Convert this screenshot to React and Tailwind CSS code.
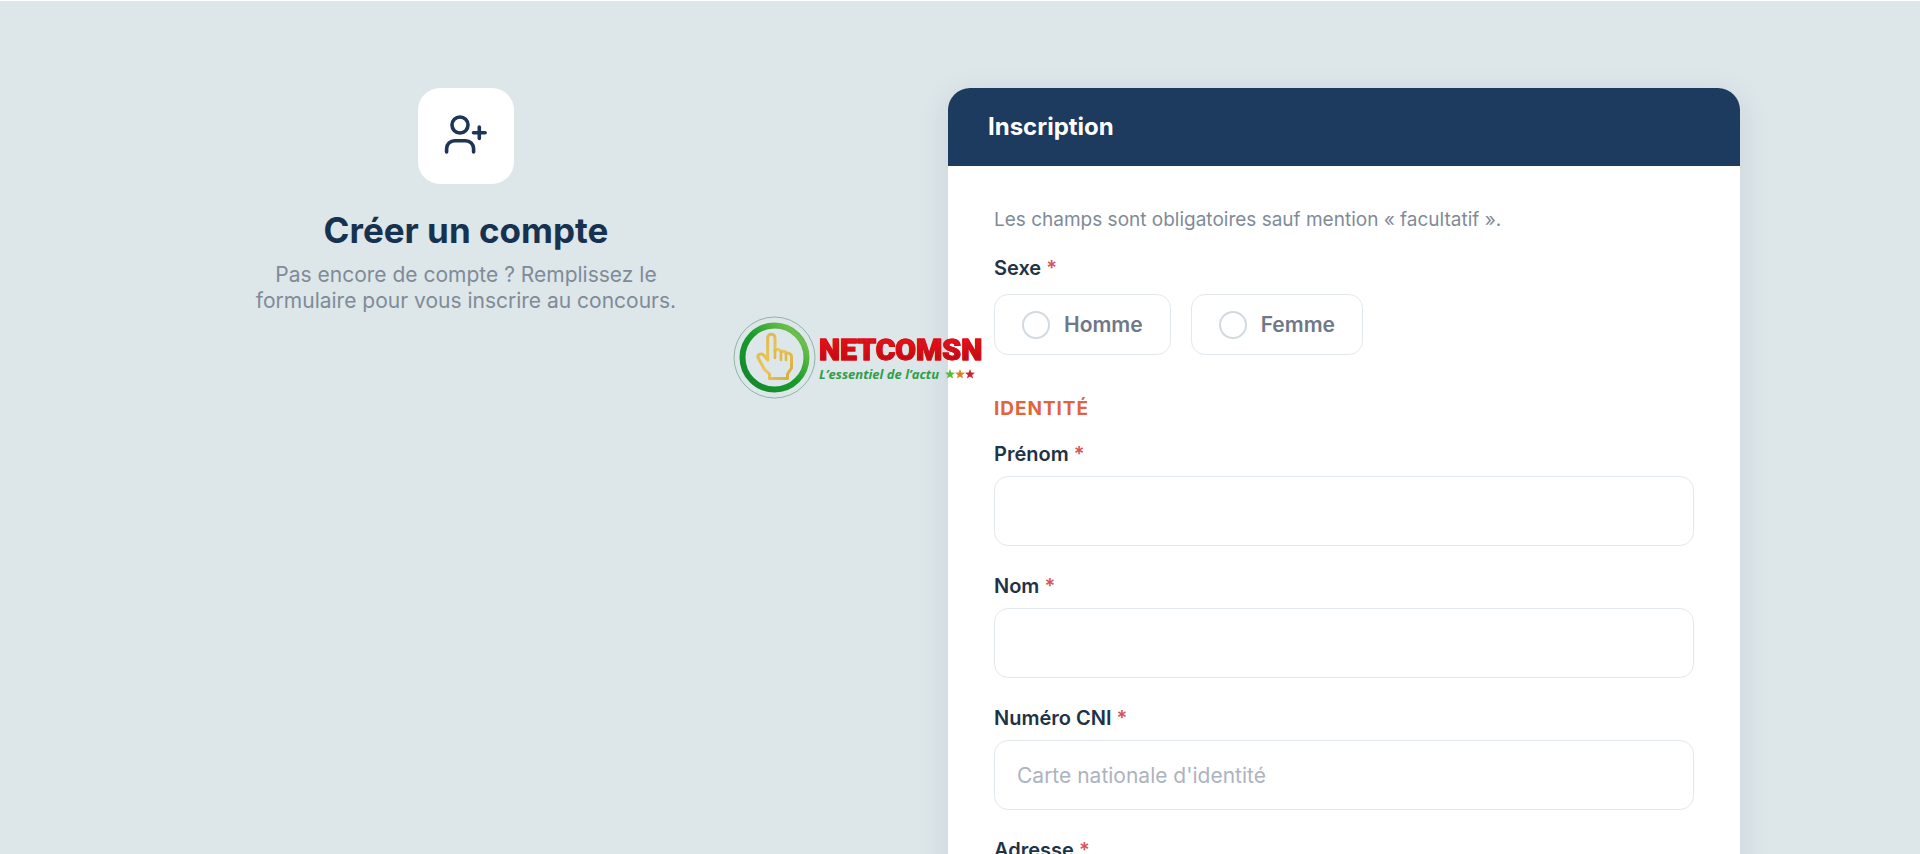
import { useState } from "react";

const fields = [
  { id: "prenom", label: "Prénom", placeholder: "" },
  { id: "nom", label: "Nom", placeholder: "" },
  { id: "cni", label: "Numéro CNI", placeholder: "Carte nationale d'identité" },
  { id: "adresse", label: "Adresse", placeholder: "" },
];

function Required() {
  return <span className="font-semibold text-[#d9535b]">*</span>;
}

function UserPlusIcon() {
  return (
    <svg
      className="h-12 w-12"
      viewBox="0 0 48 48"
      fill="none"
      stroke="#1d3557"
      strokeWidth="3.6"
      strokeLinecap="round"
      strokeLinejoin="round"
      aria-hidden="true"
    >
      <circle cx="18" cy="13" r="8" />
      <path d="M4.6 40v-3.300a8 8 0 0 1 8-8h11a8 8 0 0 1 8 8V40" />
      <path d="M37.300 15v11.400M31.500 20.700h11.600" />
    </svg>
  );
}

function Star({ color }) {
  return (
    <svg className="h-[10px] w-[10px]" viewBox="0 0 20 20" aria-hidden="true">
      <path
        fill={color}
        d="M10 0l2.600 6.900 7.400.4-5.800 4.600 2 7.200L10 15l-6.200 4.100 2-7.200L0 7.300l7.400-.4z"
      />
    </svg>
  );
}

function Logo() {
  return (
    <div className="absolute left-[733px] top-[315px] z-10 flex items-center gap-[3px]">
      <svg className="h-[83px] w-[83px]" viewBox="0 0 83 83" fill="none" aria-hidden="true">
        <defs>
          <linearGradient id="ring" x1="0" y1="1" x2="1" y2="0">
            <stop offset="0" stopColor="#12842c" />
            <stop offset="0.5" stopColor="#1a9c2c" />
            <stop offset="0.85" stopColor="#6cc04a" />
            <stop offset="1" stopColor="#1d9a30" />
          </linearGradient>
          <linearGradient id="hand" x1="0" y1="0" x2="1" y2="1">
            <stop offset="0" stopColor="#d9b53f" />
            <stop offset="0.5" stopColor="#ecc65a" />
            <stop offset="1" stopColor="#d6ad3a" />
          </linearGradient>
        </defs>
        <circle cx="41.500" cy="41.500" r="40.500" stroke="#8fb5a4" strokeWidth="1" />
        <circle cx="41.500" cy="41.500" r="32" stroke="url(#ring)" strokeWidth="6" />
        <path
          d="M34.700 44V22c0-5 7.300-5 7.300 0v13c1.500-2.500 5.500-1.500 6 1 1.500-1.500 5-.5 5 1.500 2-1 5.500 0 5.500 3V52l-4 6v4.500H36.500V58l-5-4.500-6.500-12c-.5-3.500 3.500-4.500 5.500-2.500z"
          stroke="url(#hand)"
          strokeWidth="3"
          strokeLinejoin="round"
        />
        <path d="M42 34v8M48 36v8M53 38v6" stroke="#dfb94a" strokeWidth="2.600" strokeLinecap="round" />
      </svg>
      <div>
        <p className="bg-linear-to-b from-[#f0141c] to-[#b80710] bg-clip-text font-['Roboto',sans-serif] text-[30px] leading-8 font-black text-transparent [-webkit-text-stroke:1px_#d60d15]">
          NETCOMSN
        </p>
        <div className="flex items-center gap-[6px]">
          <p className="font-['Open_Sans',sans-serif] text-[13px] leading-4 font-bold text-[#2f9e4a] italic">
            L’essentiel de l’actu
          </p>
          <div className="flex">
            <Star color="#5cb83c" />
            <Star color="#d98324" />
            <Star color="#cf2030" />
          </div>
        </div>
      </div>
    </div>
  );
}

function RadioCard({ value, checked, onChange }) {
  return (
    <label className="flex h-[61px] cursor-pointer items-center gap-[14px] rounded-[14px] border border-[#e2e8ec] px-[27px] text-[21px] font-semibold text-[#6f7889]">
      <input
        type="radio"
        name="sexe"
        value={value}
        checked={checked}
        onChange={onChange}
        className="h-7 w-7 appearance-none rounded-full border-2 border-[#d3d9e0] bg-white checked:border-8 checked:border-[#1d3a5f]"
      />
      {value}
    </label>
  );
}

function Field({ id, label, placeholder }) {
  return (
    <div className="mb-[26px]">
      <label htmlFor={id} className="mb-2 block text-[20px] leading-7 font-semibold text-[#1f3347]">
        {label} <Required />
      </label>
      <input
        id={id}
        type="text"
        placeholder={placeholder}
        className="h-[70px] w-full rounded-[14px] border border-[#e2e8ec] bg-white px-[22px] text-[21px] text-[#1f3347] placeholder:text-[#adb3bf]"
      />
    </div>
  );
}

export default function App() {
  const [sexe, setSexe] = useState("");

  return (
    <div className="relative h-screen overflow-hidden border-t border-white bg-[#dde6e9] font-['Inter',sans-serif]">
      <div className="mx-auto grid max-w-[1560px] grid-cols-[13fr_18fr] items-start gap-x-[196px] pt-[87px]">
        {/* Intro */}
        <div className="flex flex-col items-center text-center">
          <div className="flex h-24 w-24 items-center justify-center rounded-[22px] bg-white">
            <UserPlusIcon />
          </div>
          <h1 className="mt-[22px] text-[35px] leading-[48px] font-bold text-[#17324f]">Créer un compte</h1>
          <p className="mt-2 max-w-[440px] text-[21px] leading-[26px] text-[#7f8b98]">
            Pas encore de compte ? Remplissez le formulaire pour vous inscrire au concours.
          </p>
        </div>

        {/* Registration form */}
        <div className="overflow-hidden rounded-t-[22px] bg-white shadow-[0_8px_32px_rgba(30,58,110,0.1)]">
          <div className="bg-[#1d3a5f] px-10 py-[23px]">
            <h2 className="text-[24px] leading-8 font-bold text-white">Inscription</h2>
          </div>
          <form className="px-[46px] pt-10">
            <p className="text-[19px] leading-7 text-[#7f8b98]">
              Les champs sont obligatoires sauf mention « facultatif ».
            </p>

            <fieldset className="mt-5">
              <legend className="mb-3 text-[20px] leading-7 font-semibold text-[#1f3347]">
                Sexe <Required />
              </legend>
              <div className="flex gap-5">
                <RadioCard value="Homme" checked={sexe === "Homme"} onChange={() => setSexe("Homme")} />
                <RadioCard value="Femme" checked={sexe === "Femme"} onChange={() => setSexe("Femme")} />
              </div>
            </fieldset>

            <h3 className="mt-10 mb-[17px] text-[19px] leading-7 font-bold tracking-wider text-[#e0643c] uppercase">
              Identité
            </h3>
            {fields.map((field) => (
              <Field key={field.id} {...field} />
            ))}
          </form>
        </div>
      </div>

      <Logo />
    </div>
  );
}
